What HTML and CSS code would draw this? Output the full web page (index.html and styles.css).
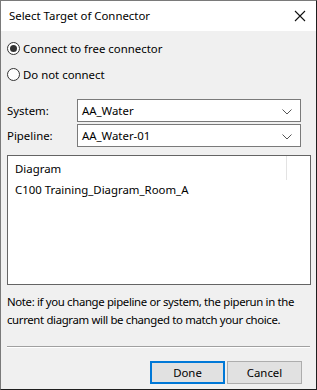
FILE: index.html
```html
<!DOCTYPE html>
<html lang="en">
<head>
    <meta charset="UTF-8">
    <meta name="viewport" content="width=device-width, initial-scale=1.0">
    <title>Select Target of Connector</title>
    <link rel="stylesheet" href="styles.css">
</head>
<body>
    <div class="dialog">
        <!-- title bar -->
        <div class="titlebar">
            <span class="title">Select Target of Connector</span>
            <svg class="close-x" width="12" height="12" viewBox="0 0 12 12">
                <path d="M1 1 L11 11 M11 1 L1 11" stroke="#111" stroke-width="1.1" fill="none"/>
            </svg>
        </div>

        <div class="content">
            <!-- radios -->
            <div class="radio-row first">
                <span class="radio checked"></span>
                <span>Connect to free connector</span>
            </div>
            <div class="radio-row">
                <span class="radio"></span>
                <span>Do not connect</span>
            </div>

            <!-- combos -->
            <div class="field-row system-row">
                <label>System:</label>
                <div class="combo">
                    <span>AA_Water</span>
                    <svg class="arrow" width="10" height="6" viewBox="0 0 10 6">
                        <path d="M0.5 0.5 L5 5 L9.5 0.5" stroke="#555" stroke-width="1" fill="none"/>
                    </svg>
                </div>
            </div>
            <div class="field-row">
                <label>Pipeline:</label>
                <div class="combo">
                    <span>AA_Water-01</span>
                    <svg class="arrow" width="10" height="6" viewBox="0 0 10 6">
                        <path d="M0.5 0.5 L5 5 L9.5 0.5" stroke="#555" stroke-width="1" fill="none"/>
                    </svg>
                </div>
            </div>

            <!-- list -->
            <div class="listbox">
                <div class="list-header">
                    <span class="col-head">Diagram</span>
                    <span class="col-sep"></span>
                </div>
                <div class="list-item">C100 Training_Diagram_Room_A</div>
            </div>

            <p class="note">Note: if you change pipeline or system, the piperun in the<br>current diagram will be changed to match your choice.</p>

            <div class="separator"></div>

            <div class="buttons">
                <button class="btn default">Done</button>
                <button class="btn">Cancel</button>
            </div>
        </div>
    </div>
</body>
</html>
```

FILE: styles.css
```css
body {
    margin: 0;
    padding: 0;
    font-family: "Noto Sans", "Open Sans", sans-serif;
    font-size: 11.4px;
    color: #000;
    background-color: #f0f0f0;
}

.dialog {
    width: 317px;
    height: 390px;
    box-sizing: border-box;
    border: 1px solid #7a7a7a;
    border-right-color: #1e1e1e;
    border-bottom-color: #1e1e1e;
    background-color: #f0f0f0;
    display: flex;
    flex-direction: column;
    overflow: hidden;
}

.titlebar {
    height: 30px;
    background-color: #fff;
    display: flex;
    align-items: center;
    justify-content: space-between;
    padding: 0 9px 0 8px;
    flex-shrink: 0;
}

.title {
    padding-bottom: 1px;
}

.close-x {
    margin-right: 1px;
}

.content {
    padding: 0 6px 0 6px;
    display: flex;
    flex-direction: column;
}

.radio-row {
    display: flex;
    align-items: center;
    height: 20px;
    gap: 3px;
    margin-top: 6px;
}

.radio-row.first {
    margin-top: 7px;
}

.radio {
    width: 11px;
    height: 11px;
    border: 1px solid #333;
    border-radius: 50%;
    background-color: #fff;
    display: flex;
    align-items: center;
    justify-content: center;
}

.radio.checked::after {
    content: "";
    width: 7px;
    height: 7px;
    border-radius: 50%;
    background-color: #333;
}

.field-row {
    display: flex;
    align-items: center;
    margin-top: 2px;
}

.system-row {
    margin-top: 15px;
}

.field-row label {
    width: 70px;
}

.combo {
    width: 224px;
    height: 23px;
    box-sizing: border-box;
    border: 1px solid #7a7a7a;
    background-color: #fff;
    display: flex;
    align-items: center;
    justify-content: space-between;
    padding: 0 8px 0 4px;
}

.arrow {
    margin-top: 2px;
}

.listbox {
    margin-top: 8px;
    width: 304px;
    height: 130px;
    box-sizing: border-box;
    border: 1px solid #646464;
    background-color: #fff;
}

.list-header {
    display: flex;
    height: 24px;
    align-items: center;
}

.col-head {
    flex: 1;
    padding-left: 7px;
}

.col-sep {
    width: 1px;
    height: 24px;
    background-color: #e3e3e3;
    margin-right: 23px;
}

.list-item {
    padding-left: 7px;
    height: 20px;
    line-height: 20px;
}

.note {
    margin: 8px -6px 0 0;
    line-height: 18px;
    letter-spacing: -0.35px;
    white-space: nowrap;
}

.separator {
    margin-top: 17px;
    height: 1px;
    width: 303px;
    background-color: #a0a0a0;
    border-bottom: 1px solid #fff;
}

.buttons {
    display: flex;
    justify-content: flex-end;
    gap: 2px;
    margin-top: 13px;
    padding-right: 8px;
}

.btn {
    width: 75px;
    height: 23px;
    font-family: inherit;
    font-size: 11.4px;
    background-color: #e1e1e1;
    border: 1px solid #adadad;
    padding: 0;
    color: #000;
}

.btn.default {
    border: 2px solid #0078d7;
}
```
